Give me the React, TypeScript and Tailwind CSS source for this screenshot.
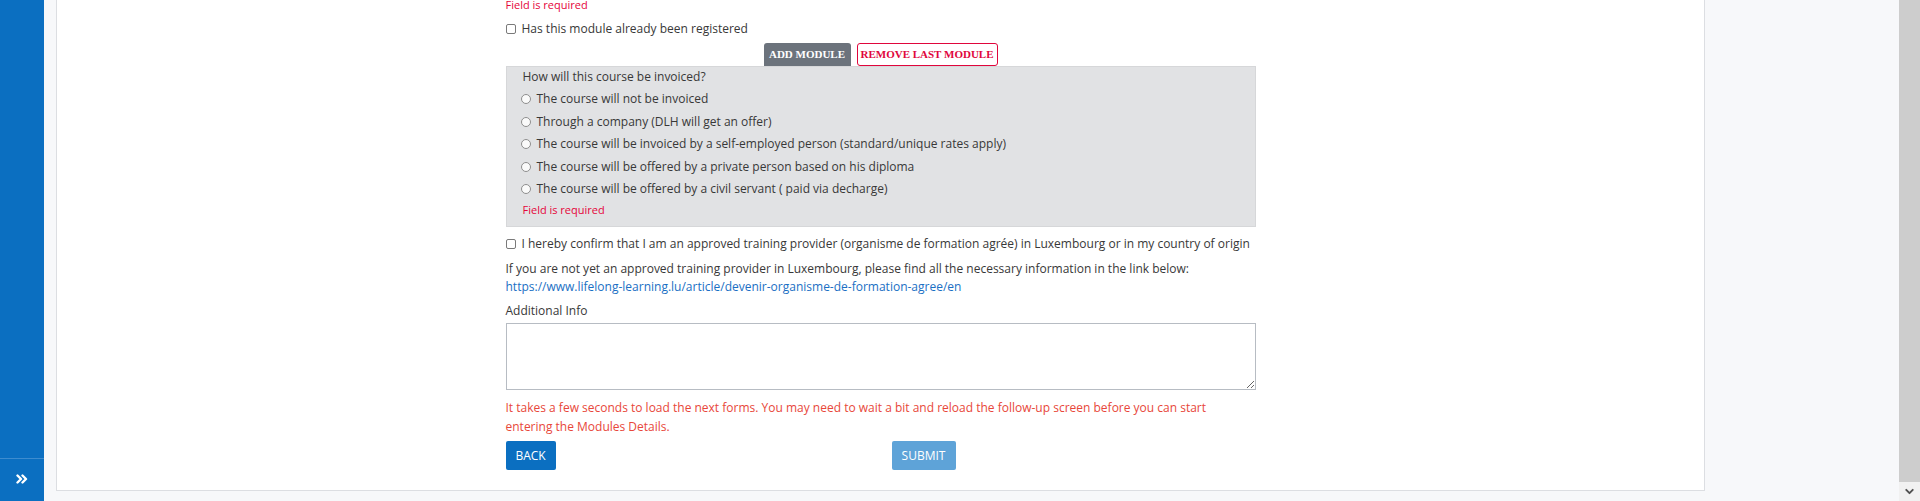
import { ChevronDown } from "lucide-react";

const radios = [
  "The course will not be invoiced",
  "Through a company (DLH will get an offer)",
  "The course will be invoiced by a self-employed person (standard/unique rates apply)",
  "The course will be offered by a private person based on his diploma",
  "The course will be offered by a civil servant ( paid via decharge)",
];

function Checkbox() {
  return <span className="inline-block w-[10px] h-[10px] shrink-0 rounded-[2px] border border-[#7a7a7a] bg-white" />;
}

function Radio() {
  return <span className="inline-block w-[10px] h-[10px] shrink-0 rounded-full border border-[#8e8e8e] bg-[#fafafa]" />;
}

export default function App() {
  return (
    <div
      className="flex w-[1920px] h-[501px] overflow-hidden bg-[#f7f8fa] text-[12px] text-[#383838]"
      style={{ fontFamily: '"Open Sans", "Liberation Sans", sans-serif' }}
    >
      {/* sidebar */}
      <div className="w-[44px] h-full bg-[#0b6fc1] flex flex-col justify-end">
        <div className="h-[43px] border-t border-[#3d8ccf] flex items-center justify-center pb-[2px]">
          <svg width="12" height="10" viewBox="0 0 12 10" fill="none" stroke="white" strokeWidth="2.4" strokeLinecap="round" strokeLinejoin="round">
            <path d="M1.5 1.5 L5 5 L1.5 8.5" />
            <path d="M6.5 1.5 L10 5 L6.5 8.5" />
          </svg>
        </div>
      </div>

      {/* card */}
      <div className="ml-[12px] w-[1649px] self-start bg-white border-x border-b border-[#dcdee2]">
        <div className="w-[750px] mx-auto pb-[20px]">
          <p className="leading-[10px] text-[11px] text-[#e5053a]">Field is required</p>

          <label className="mt-[10px] h-[18px] flex items-center gap-[6px]">
            <Checkbox />
            <span>Has this module already been registered</span>
          </label>

          <div className="mt-[5px] flex justify-center gap-[6px]" style={{ fontFamily: '"Liberation Serif", serif' }}>
            <button className="h-[23px] w-[87px] rounded-t-[3px] bg-[#6c737c] text-white text-[11px] font-bold">
              ADD MODULE
            </button>
            <button className="h-[23px] w-[141px] rounded-[3px] border border-[#e0063c] bg-white text-[#e0063c] text-[11px] font-bold">
              REMOVE LAST MODULE
            </button>
          </div>

          {/* invoice box */}
          <div className="border border-[#d6d7d9] bg-[#e1e2e4] pt-[1px] pb-[8px]">
            <p className="pl-[16px] leading-[18px]">How will this course be invoiced?</p>
            <div className="mt-[2px]">
              {radios.map((r) => (
                <label key={r} className="h-[22.5px] pl-[14px] flex items-center gap-[6px]">
                  <Radio />
                  <span>{r}</span>
                </label>
              ))}
            </div>
            <p className="mt-[1.5px] pl-[16px] leading-[16px] text-[11px] text-[#e5053a]">Field is required</p>
          </div>

          <label className="mt-[8px] h-[18px] flex items-center gap-[6px]">
            <Checkbox />
            <span>
              I hereby confirm that I am an approved training provider (organisme de formation agrée) in Luxembourg or in my country of origin
            </span>
          </label>

          <p className="mt-[7px] leading-[18px]">
            If you are not yet an approved training provider in Luxembourg, please find all the necessary information in the link below:
            <br />
            <a className="text-[#1a6fc4]" href="#">
              https://www.lifelong-learning.lu/article/devenir-organisme-de-formation-agree/en
            </a>
          </p>

          <p className="mt-[6px] leading-[18px]">Additional Info</p>
          <textarea className="mt-[3px] block w-full h-[67px] border border-[#b7bcc3] bg-white" />

          <p className="mt-[7.5px] leading-[19px] text-[#e8473a]">
            It takes a few seconds to load the next forms. You may need to wait a bit and reload the follow-up screen before you can start
            <br />
            entering the Modules Details.
          </p>

          <div className="mt-[5.5px] flex">
            <button className="h-[29px] w-[50px] rounded-[2px] bg-[#0b6fc1] text-white">BACK</button>
            <button className="ml-[336px] h-[29px] w-[64px] rounded-[2px] bg-[#5ea3d8] text-white">SUBMIT</button>
          </div>
        </div>
      </div>

      <div className="flex-1" />

      {/* scrollbar */}
      <div className="w-[21px] h-full flex flex-col bg-[#f1f1f1]">
        <div className="h-[482px] bg-[#cdcdcd]" />
        <div className="flex-1 flex items-center justify-center">
          <ChevronDown size={13} strokeWidth={3.5} className="text-[#505050]" />
        </div>
      </div>
    </div>
  );
}
